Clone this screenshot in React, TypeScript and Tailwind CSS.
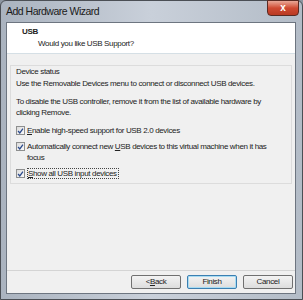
import React from 'react';

const ui = { fontFamily: '"Liberation Sans", Arial, sans-serif' };

const Check: React.FC<{ label: React.ReactNode; focused?: boolean }> = ({ label, focused }) => (
  <div className="flex items-start gap-[2px]">
    <div className="mt-[1px] flex h-[9px] w-[9px] shrink-0 items-center justify-center border border-[#8e8f8f] bg-gradient-to-br from-[#dcdcdc] to-[#fafafa]">
      <svg viewBox="0 0 10 10" className="h-[8px] w-[8px]">
        <path d="M1.5 5 L4 7.8 L8.5 1.5" fill="none" stroke="#2b4a8c" strokeWidth="1.8" />
      </svg>
    </div>
    <div className={focused ? 'border border-dotted border-[#444] pr-[1px] leading-[9px]' : 'leading-[11px]'}>{label}</div>
  </div>
);

const Btn: React.FC<{ children: React.ReactNode; primary?: boolean }> = ({ children, primary }) => (
  <div
    className={`flex h-[14px] w-[50px] items-center justify-center rounded-[2px] border bg-gradient-to-b from-[#f3f3f3] to-[#dddddd] text-[#222] ${
      primary ? 'border-[#3c7fb1] shadow-[inset_0_0_0_1px_#a8dcf3]' : 'border-[#707070]'
    }`}
  >
    {children}
  </div>
);

export default function App() {
  return (
    <div className="h-[300px] w-[303px] overflow-hidden bg-[#8d96a1]" style={ui}>
      <div className="flex h-full flex-col rounded-t-[6px] border border-[#4b4f55] bg-gradient-to-r from-[#aab3bf] via-[#c9d0da] to-[#b3bcc7] pl-[5px] pr-[6px] pb-[5px]">
        {/* title bar */}
        <div className="relative flex h-[21px] shrink-0 items-center">
          <span className="text-[10.5px] tracking-[-0.5px] text-[#1a1a1a]">Add Hardware Wizard</span>
          <div className="absolute right-[-3px] top-[-1px] flex h-[16px] w-[32px] items-center justify-center rounded-b-[4px] border border-[#5a2a22] bg-gradient-to-b from-[#e8a797] via-[#cf4a32] to-[#b93a23]">
            <span className="text-[10px] font-bold leading-none text-white">x</span>
          </div>
        </div>
        {/* client */}
        <div className="flex h-[272px] flex-col border border-[#6d7580] bg-[#f0f0f0] text-[8px] tracking-[-0.35px] text-[#222]">
          <div className="h-[31px] shrink-0 border-b border-[#d5dfe5] bg-white pl-[15px] pt-[3px]">
            <div className="font-bold leading-[11px]">USB</div>
            <div className="pl-[16px] leading-[13px]">Would you like USB Support?</div>
          </div>
          <div className="pl-[3px] pr-[3px] pt-[11px]">
            <div className="h-[119px] border border-[#dcdcdc] pl-[5px] pr-[8px]">
              <div className="leading-[11px]">Device status</div>
              <div className="mt-[1px] leading-[11px]">Use the Removable Devices menu to connect or disconnect USB devices.</div>
              <div className="mt-[7px] pr-[6px] leading-[11px]">
                To disable the USB controller, remove it from the list of available hardware by clicking Remove.
              </div>
              <div className="mt-[7px] flex flex-col gap-[5px] pr-[6px]">
                <Check label={<><u>E</u>nable high-speed support for USB 2.0 devices</>} />
                <Check label={<>Automatically connect new <u>U</u>SB devices to this virtual machine when it has focus</>} />
                <Check focused label={<><u>S</u>how all USB input devices</>} />
              </div>
            </div>
          </div>
          <div className="flex-1" />
          <div className="border-t border-[#d4d4d4]" />
          <div className="flex h-[22px] items-center justify-end gap-[6px] pr-[2px] pb-[1px]">
            <Btn>&lt; <u>B</u>ack</Btn>
            <Btn primary>Finish</Btn>
            <Btn>Cancel</Btn>
          </div>
        </div>
      </div>
    </div>
  );
}
